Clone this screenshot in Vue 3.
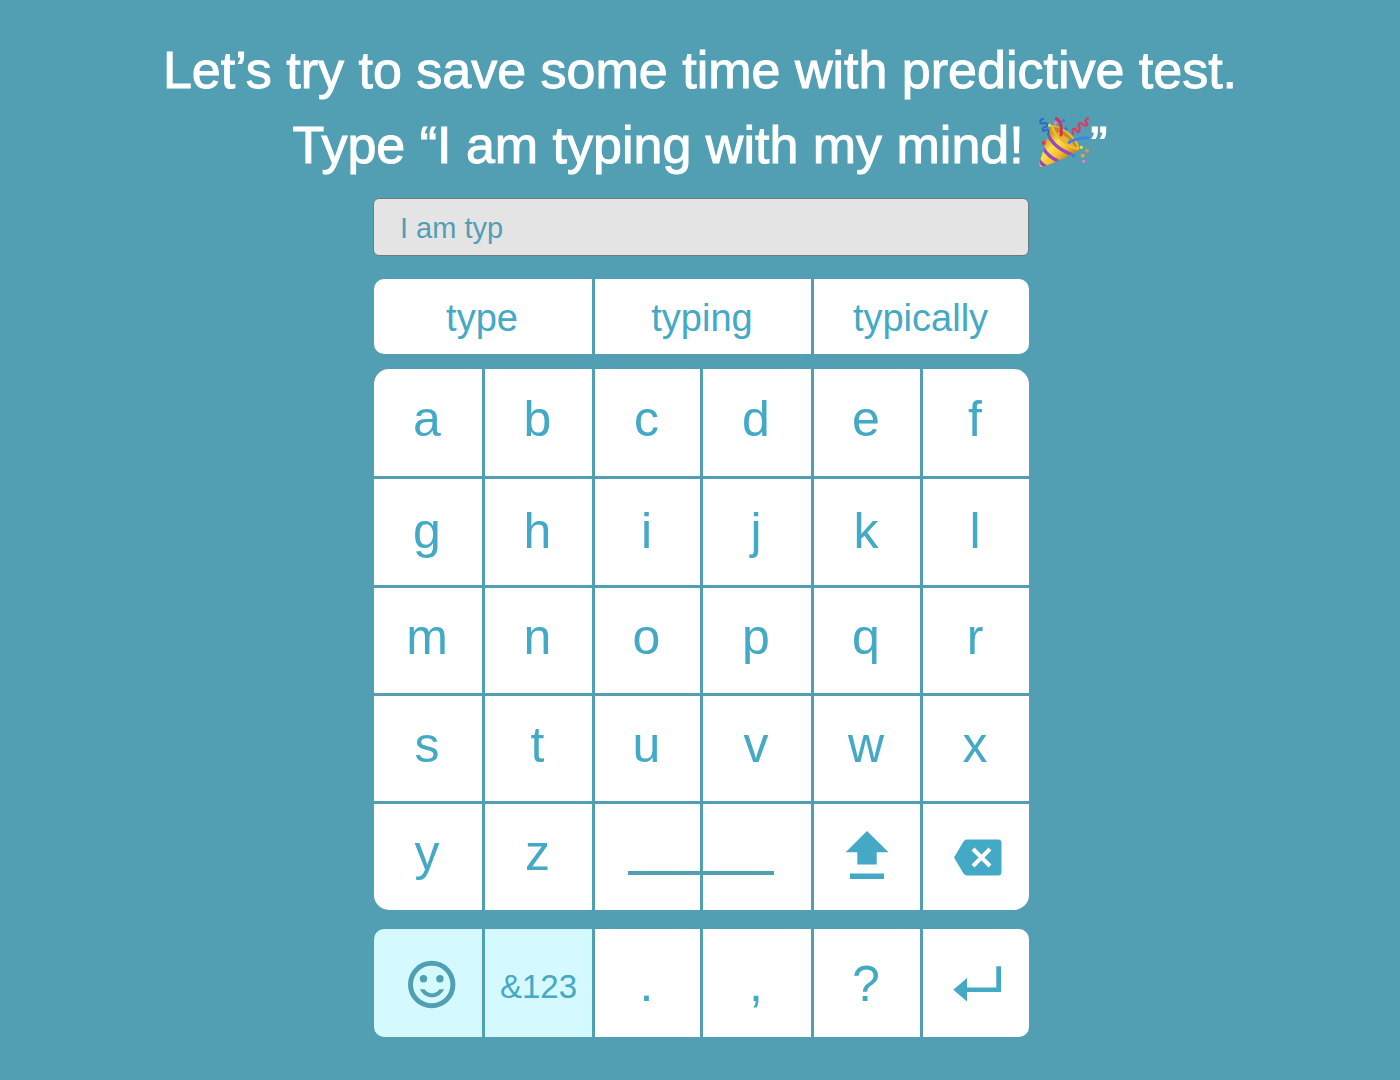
<script setup>
import { ref } from 'vue'

const message = ref('I am typ')
const suggestions = ['type', 'typing', 'typically']
const rows = [
  { keys: 'abcdef' },
  { keys: 'ghijkl', low: true },
  { keys: 'mnopqr' },
  { keys: 'stuvwx' },
  { keys: 'yz' },
]

function press(key) {
  message.value += key
}
function complete(word) {
  message.value = message.value.replace(/\S*$/, word + ' ')
}
function erase() {
  message.value = message.value.slice(0, -1)
}
</script>

<template>
  <main class="page">
    <h1 class="prompt">
      <span class="line">Let’s try to save some time with predictive test.</span>
      <span class="line">Type “I am typing with my mind! <svg class="party" viewBox="117 51 156 153" role="img" aria-label="Party popper">
          <defs>
            <linearGradient id="cone" gradientUnits="userSpaceOnUse" x1="135" y1="125" x2="190" y2="185">
              <stop offset="0" stop-color="#d9a020" />
              <stop offset="0.35" stop-color="#ffe04a" />
              <stop offset="0.7" stop-color="#f2c032" />
              <stop offset="1" stop-color="#cf901c" />
            </linearGradient>
            <clipPath id="coneShape">
              <path d="M156 77 C172 86 222 128 240 149 C232 158 150 196 131 201 Q120 201 121 190 Z" />
            </clipPath>
          </defs>
          <path d="M156 77 C172 86 222 128 240 149 C232 158 150 196 131 201 Q120 201 121 190 Z" fill="url(#cone)" />
          <g clip-path="url(#coneShape)" fill="none" stroke="#9547c4" stroke-width="10">
            <path d="M146 101 Q162 142 218 164" />
            <path d="M132 143 Q145 168 178 184" />
            <path d="M119 178 Q126 192 144 202" />
          </g>
          <path d="M157 76 C182 70 246 118 240 149 C218 154 157 110 157 76 Z" fill="#f0bd38" />
          <path d="M164 80 C186 80 232 120 234 142 C214 140 170 108 164 80 Z" fill="#c38a20" />
          <path d="M176 96 Q208 108 230 143 Q198 136 176 110 Z" fill="#e9b236" />
          <g fill="none" stroke-linecap="round" stroke-width="9">
            <path d="M172 56 Q191 65 186 105" stroke="#df2d52" />
            <path d="M210 127 Q236 112 267 114" stroke="#3f83e8" />
            <path d="M133 56 C119 61 122 73 133 70 C147 65 149 79 136 82 C126 86 132 98 139 91 C147 84 152 91 147 104" stroke="#2d69ce" stroke-width="6" />
            <path d="M222 102 C217 83 229 82 232 92 C239 105 245 87 239 77 C237 66 247 69 253 74 C264 80 269 73 260 66 Q257 61 267 55" stroke="#d83c68" stroke-width="7" />
          </g>
          <g fill="#f2df37">
            <circle cx="152" cy="76" r="5" /><circle cx="247" cy="142" r="5" />
          </g>
          <g fill="#327dde">
            <circle cx="193" cy="62" r="5" /><circle cx="201" cy="86" r="5" /><circle cx="223" cy="167" r="5" />
          </g>
          <g fill="#ea82b3">
            <circle cx="169" cy="69" r="5" /><circle cx="254" cy="184" r="5" />
          </g>
          <circle cx="134" cy="129" r="6" fill="#dc3852" />
          <circle cx="264" cy="152" r="6" fill="#e5923b" />
          <circle cx="251" cy="167" r="6" fill="#e9a43b" />
        </svg>”</span>
    </h1>

    <div class="device">
      <input v-model="message" class="entry" type="text" aria-label="Message" />

      <div class="board suggestions">
        <button v-for="word in suggestions" :key="word" class="key" type="button" @click="complete(word)">{{ word }}</button>
      </div>

      <div class="board letters">
        <template v-for="row in rows" :key="row.keys">
          <button v-for="k in row.keys" :key="k" class="key" :class="{ low: row.low }" type="button" @click="press(k)">{{ k }}</button>
        </template>
        <button class="key space" type="button" aria-label="Space" @click="press(' ')">
          <svg viewBox="0 0 216 106" preserveAspectRatio="none" fill="#529fb4">
            <rect x="105" y="0" width="3" height="106" />
            <rect x="33" y="67" width="146" height="4" />
          </svg>
        </button>
        <button class="key icon" type="button" aria-label="Shift">
          <svg width="48" height="52" viewBox="0 0 48 52" fill="currentColor">
            <path d="M24 0 L45.500 21.300 H33.700 V33.500 H14.300 V21.300 H2.700 Z M7 42.500 H41 V48 H7 Z" />
          </svg>
        </button>
        <button class="key icon" type="button" aria-label="Backspace" @click="erase">
          <svg width="52" height="40" viewBox="0 0 52 40">
            <path d="M17 2.500 H48 Q51.500 2.500 51.500 6 V35 Q51.500 38.500 48 38.500 H17 Q15 38.500 13.500 36.500 L4 20.500 L13.500 4.500 Q15 2.500 17 2.500 Z" fill="currentColor" />
            <path d="M23 12 L40 29 M40 12 L23 29" stroke="#fff" stroke-width="4" />
          </svg>
        </button>
      </div>

      <div class="board extras">
        <button class="key icon pale" type="button" aria-label="Emoji">
          <svg width="56" height="52" viewBox="0 0 56 52" fill="#529fb4">
            <circle cx="31.700" cy="27.500" r="21.200" fill="none" stroke="#529fb4" stroke-width="5" />
            <circle cx="23.500" cy="21.700" r="3.700" />
            <circle cx="39.900" cy="21.700" r="3.700" />
            <path d="M20 32.300 H24.500 C28 37.800 36 37.800 39.500 32.300 H44 C39 43 25 43 20 32.300 Z" />
          </svg>
        </button>
        <button class="key pale symbols" type="button">&amp;123</button>
        <button class="key mark" type="button" @click="press('.')">.</button>
        <button class="key mark" type="button" @click="press(',')">,</button>
        <button class="key mark" type="button" @click="press('?')">?</button>
        <button class="key icon" type="button" aria-label="Enter">
          <svg width="52" height="40" viewBox="0 0 52 40" fill="currentColor">
            <path d="M3.300 26.700 L17 15 V24.500 H46.300 V3.300 H51 V29 H17 V38.500 Z" />
          </svg>
        </button>
      </div>
    </div>
  </main>
</template>

<style>
body {
  margin: 0;
  background: #529fb4;
}
</style>

<style scoped>
.page {
  box-sizing: border-box;
  min-height: 100vh;
  padding: 33px 0 43px;
  background: #529fb4;
  font-family: "Liberation Sans", Arial, sans-serif;
}
.prompt {
  margin: 0;
  color: #fff;
  font-size: 52px;
  font-weight: 400;
  line-height: 75px;
  text-align: center;
  -webkit-text-stroke: 1px #fff;
}
.line {
  display: block;
}
.party {
  width: 52px;
  height: 51px;
  vertical-align: -5px;
  -webkit-text-stroke: 0;
}
.device {
  box-sizing: border-box;
  max-width: 658px;
  margin: 15px auto 0;
  padding-left: 2px;
}
.entry {
  display: block;
  box-sizing: border-box;
  width: 100%;
  height: 58px;
  margin: 0;
  padding: 2px 26px 0;
  border: 1px solid #707880;
  border-radius: 6px;
  background: #e4e4e4;
  color: #529fb4;
  font: 29px "Liberation Sans", Arial, sans-serif;
}
.board {
  display: grid;
  grid-template-columns: 108fr 107fr 105fr 108fr 106fr 106fr;
  gap: 3px;
  margin-left: 1px;
  overflow: hidden;
}
.suggestions {
  grid-template-columns: 218fr 216fr 215fr;
  grid-template-rows: 75px;
  margin-top: 23px;
  border-radius: 10px;
}
.letters {
  grid-template-rows: 107px 106px 105px 105px 106px;
  margin-top: 15px;
  border-radius: 15px;
}
.extras {
  grid-template-rows: 108px;
  margin-top: 19px;
  border-radius: 10px;
}
.key {
  display: flex;
  align-items: center;
  justify-content: center;
  min-width: 0;
  margin: 0;
  padding: 0 2px 8px 0;
  border: 0;
  background: #fff;
  color: #43a9c4;
  font: 50px "Liberation Sans", Arial, sans-serif;
  cursor: pointer;
}
.suggestions .key {
  padding: 3px 2px 0 0;
  font-size: 38px;
}
.low {
  padding-bottom: 2px;
}
.icon,
.space {
  padding: 0;
}
.space {
  grid-column: span 2;
}
.space svg {
  width: 100%;
  height: 100%;
}
.pale {
  background: #d4f9ff;
}
.symbols {
  padding: 7px 0 0;
  font-size: 33px;
}
.mark {
  padding: 2px 2px 0 0;
}
</style>
